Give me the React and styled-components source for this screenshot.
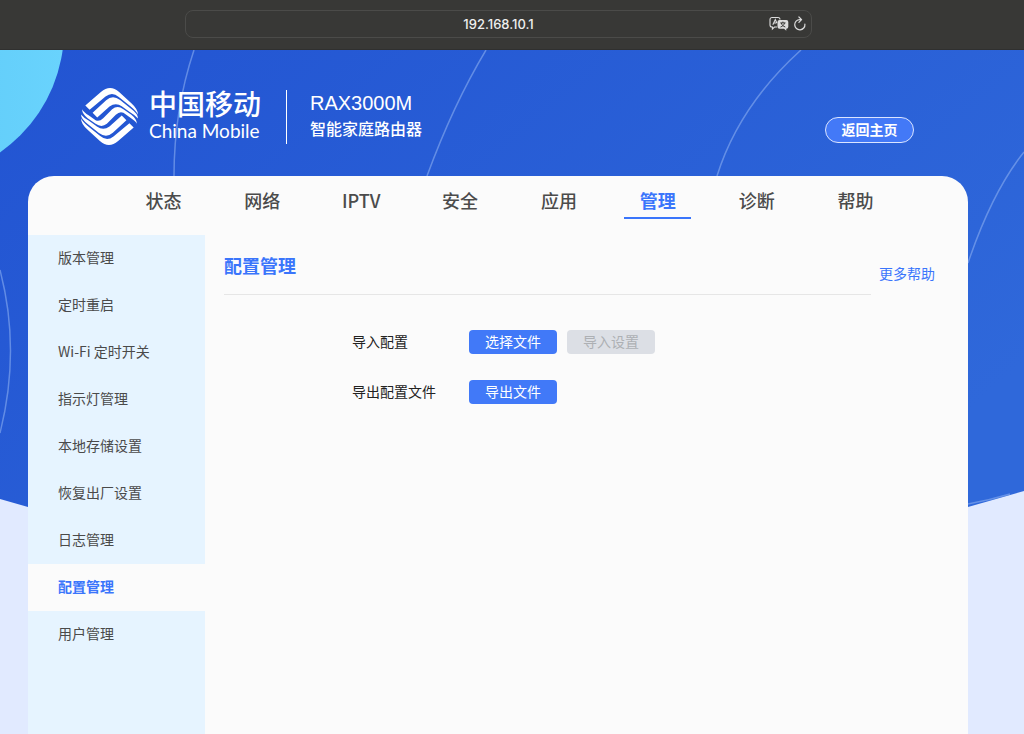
import React from "react";
import styled, { createGlobalStyle, css } from "styled-components";

const GlobalStyle = createGlobalStyle`
  *, *::before, *::after { box-sizing: border-box; }
  html, body, #root { min-height: 100vh; }
  body {
    margin: 0;
    font-family: "Noto Sans CJK SC", "Noto Sans", sans-serif;
    font-size: 14px;
    color: #444;
    background: #e1eaff;
  }
  button, input { font: inherit; }
  #root { display: flex; }
`;

const Page = styled.div`
  flex: 1;
  min-width: 0;
  min-height: 100vh;
  display: flex;
  flex-direction: column;
`;

const BrowserBar = styled.div`
  height: 50px;
  padding: 10px 212px 0 185px;
  background: #383836;
  border-bottom: 1px solid #30302f;
`;

const AddressField = styled.div`
  position: relative;
`;

const AddressInput = styled.input`
  display: block;
  width: 100%;
  height: 28px;
  padding: 0 48px;
  border: 1px solid #4b4b49;
  border-radius: 8px;
  background: transparent;
  color: #efefef;
  font-family: Inter, "Liberation Sans", sans-serif;
  font-size: 13px;
  font-weight: 500;
  text-align: center;
  outline: none;
`;

const AddressTools = styled.div`
  position: absolute;
  top: 6px;
  right: 5px;
  display: flex;
  align-items: center;
  gap: 4px;
`;

const ToolButton = styled.button`
  display: flex;
  padding: 0;
  border: 0;
  background: none;
  color: #dcdcdc;
`;

const Site = styled.div`
  position: relative;
  flex: 1;
  display: flex;
  flex-direction: column;
  overflow: hidden;
`;

const Backdrop = styled.svg`
  position: absolute;
  inset: 0;
  width: 100%;
  height: 100%;
`;

const Header = styled.header`
  position: relative;
  height: 126px;
  padding: 0 110px 31px 81px;
  display: flex;
  align-items: flex-end;
  justify-content: space-between;
  color: #fff;
`;

const Brand = styled.div`
  display: flex;
  align-items: center;
  height: 57px;
`;

const BrandName = styled.div`
  width: 137px;
  height: 57px;
  margin-left: 11px;
  display: flex;
  flex-direction: column;
`;

const BrandChinese = styled.span`
  font-size: 28px;
  line-height: 30px;
  font-weight: 500;
  white-space: nowrap;
`;

const BrandEnglish = styled.span`
  font-family: Lato, sans-serif;
  font-size: 19px;
  line-height: 26px;
  white-space: nowrap;
`;

const Product = styled.div`
  height: 54px;
  padding-left: 23px;
  border-left: 1px solid #fff;
  display: flex;
  flex-direction: column;
  white-space: nowrap;
`;

const Model = styled.span`
  font-family: "Liberation Sans", sans-serif;
  font-size: 20px;
  line-height: 26px;
`;

const ProductType = styled.span`
  font-size: 16px;
  line-height: 25px;
  font-weight: 500;
`;

const HomeButton = styled.button`
  width: 89px;
  height: 26px;
  margin-bottom: 2px;
  padding: 0 0 2px;
  border: 1px solid #dbe5ff;
  border-radius: 13px;
  background: #4379f7;
  color: #fff;
  font-weight: 700;
  line-height: 20px;
`;

const Card = styled.div`
  position: relative;
  flex: 1;
  margin: 0 56px 0 28px;
  display: flex;
  flex-direction: column;
  border-radius: 26px 26px 0 0;
  overflow: hidden;
  background: #fbfbfb;
`;

const TopNav = styled.nav`
  height: 59px;
  padding: 0 63px 0 86px;
  display: flex;
`;

const TopLink = styled.a`
  flex: 1;
  display: flex;
  flex-direction: column;
  align-items: center;
  color: #4b4b4b;
  font-size: 18px;
  font-weight: 500;
  line-height: 26px;
  padding-top: 11px;
  text-decoration: none;

  ${(p) =>
    p.$active &&
    css`
      color: #3a75fb;
      font-weight: 700;
      &::after {
        content: "";
        width: 67px;
        height: 2px;
        margin-top: 4px;
        background: #3a75fb;
      }
    `}
`;

const Body = styled.div`
  flex: 1;
  display: flex;
`;

const Sidebar = styled.nav`
  flex: none;
  width: 177px;
  background: #e6f4ff;
`;

const SideLink = styled.a`
  display: block;
  padding: 0 0 2px 30px;
  line-height: 45px;
  color: ${(p) => (p.$active ? "#3a75fb" : "#4a4a4a")};
  background: ${(p) => (p.$active ? "#fbfbfb" : "transparent")};
  font-weight: ${(p) => (p.$active ? 700 : 400)};
  text-decoration: none;
`;

const Main = styled.main`
  flex: 1;
  padding: 0 33px 0 19px;
`;

const SectionHeader = styled.div`
  display: flex;
  gap: 8px;
  height: 60px;
`;

const SectionTitle = styled.h1`
  flex: 1;
  margin: 0;
  padding-top: 17px;
  border-bottom: 1px solid #e6e6e6;
  color: #3a75fb;
  font-size: 18px;
  font-weight: 700;
  line-height: 26px;
`;

const HelpLink = styled.a`
  padding-top: 27px;
  color: #3a75fb;
  line-height: 22px;
  text-decoration: none;
`;

const Form = styled.div`
  padding: 35px 0 0 128px;
  display: flex;
  flex-direction: column;
  gap: 26px;
`;

const FormRow = styled.div`
  display: flex;
  align-items: center;
  gap: 10px;
`;

const Label = styled.label`
  width: 107px;
  padding-bottom: 2px;
  color: #222;
  line-height: 22px;
`;

const ActionButton = styled.button`
  width: 88px;
  height: 24px;
  padding: 0 0 2px;
  border: 0;
  border-radius: 4px;
  background: #4179f8;
  color: #fff;
  line-height: 22px;

  &:disabled {
    background: #dcdfe5;
    color: #adb0b4;
  }
`;

const TOP_ITEMS = ["状态", "网络", "IPTV", "安全", "应用", "管理", "诊断", "帮助"];
const SIDE_ITEMS = [
  "版本管理",
  "定时重启",
  "Wi-Fi 定时开关",
  "指示灯管理",
  "本地存储设置",
  "恢复出厂设置",
  "日志管理",
  "配置管理",
  "用户管理",
];

function TranslateIcon() {
  return (
    <svg width="20" height="16" viewBox="0 0 20 16" fill="none" aria-hidden="true">
      <path
        d="M8 11H5.5L3.4 13V11H3a2 2 0 0 1-2-2V3.5a2 2 0 0 1 2-2h6a2 2 0 0 1 2 2"
        stroke="currentColor"
        strokeWidth="1.1"
      />
      <path d="M3.8 8.8 6.3 3.5 7.8 7M4.7 7h2.8" stroke="currentColor" strokeWidth="1.1" />
      <path
        d="M10.5 4h6.8a2 2 0 0 1 2 2v4.8a2 2 0 0 1-2 2v2L15 12.8h-4.500a2 2 0 0 1-2-2V6a2 2 0 0 1 2-2z"
        fill="currentColor"
      />
      <path d="M11.300 6.900h5.200M13.900 5.600v1.300M15.500 7c-.5 2-2 3.300-4 4M12.300 7c.5 2 2 3.300 4 4" stroke="#383836" />
    </svg>
  );
}

function ReloadIcon() {
  return (
    <svg width="14" height="16" viewBox="0 0 14 16" fill="none" aria-hidden="true">
      <path
        d="M11.900 8.200A5.100 5.100 0 1 1 6.800 3.600h1.500M5.900 1l2.700 2.600L5.900 6.300"
        stroke="currentColor"
        strokeWidth="1.2"
        strokeLinecap="round"
        strokeLinejoin="round"
      />
    </svg>
  );
}

function WaveHalf() {
  return (
    <>
      <path d="M45 77 L92 36 Q120 12 147 36 L184 70 Q204 88 204 105 Q200 95 182 80 L146 51 Q126 34 106 50 L58 90 Z" />
      <path d="M67 99 L108 61 Q127 44 150 60 L182 86 Q204 102 204 116 Q197 107 180 97 L156 80 Q137 66 118 80 L81 113 Z" />
    </>
  );
}

function BrandLogo() {
  return (
    <svg width="57" height="57" viewBox="32 24 172 172" fill="#fff" role="img" aria-label="China Mobile">
      <WaveHalf />
      <g transform="rotate(180 118 110)">
        <WaveHalf />
      </g>
      <path d="M35 88Q40 97 56 107L76 121Q87 127 99 115L126 88Q142 75 160 88L184 105Q200 118 201 132Q196 123 180 113L160 99Q149 93 137 105L110 132Q94 145 76 132L52 115Q36 102 35 88Z" />
    </svg>
  );
}

function BackdropArt() {
  return (
    <Backdrop viewBox="0 0 1024 684" preserveAspectRatio="xMidYMin slice" aria-hidden="true">
      <defs>
        <linearGradient id="sky" x1="0" y1="0" x2="1" y2="0.6">
          <stop offset="0" stopColor="#2254d2" />
          <stop offset="1" stopColor="#2f68da" />
        </linearGradient>
        <linearGradient id="sun" x1="0" y1="0" x2="1" y2="0">
          <stop offset="0.5" stopColor="#5fcbf8" />
          <stop offset="1" stopColor="#69d3fd" />
        </linearGradient>
      </defs>
      <path d="M0 0H1024V441L968 457Q498 590 28 457L0 449Z" fill="url(#sky)" />
      <circle cx="-85" cy="-20" r="149" fill="url(#sun)" />
      <g fill="none" stroke="#83a7ee" strokeOpacity="0.65" strokeWidth="1.500">
        <path d="M194 0Q174 60 174 126" />
        <path d="M486 0Q453 55 427 126" />
        <path d="M801 0Q739 56 717 126" />
        <path d="M1024 102Q992 142 968 213" />
        <path d="M0 220Q21 300 0 383" />
        <path d="M968 454Q990 450 1010 444" />
      </g>
    </Backdrop>
  );
}

export default function App() {
  return (
    <>
      <GlobalStyle />
      <Page>
        <BrowserBar>
          <AddressField>
            <AddressInput type="text" aria-label="地址" defaultValue="192.168.10.1" />
            <AddressTools>
              <ToolButton type="button" aria-label="翻译">
                <TranslateIcon />
              </ToolButton>
              <ToolButton type="button" aria-label="重新加载">
                <ReloadIcon />
              </ToolButton>
            </AddressTools>
          </AddressField>
        </BrowserBar>
        <Site>
          <BackdropArt />
          <Header>
            <Brand>
              <BrandLogo />
              <BrandName>
                <BrandChinese>中国移动</BrandChinese>
                <BrandEnglish>China Mobile</BrandEnglish>
              </BrandName>
              <Product>
                <Model>RAX3000M</Model>
                <ProductType>智能家庭路由器</ProductType>
              </Product>
            </Brand>
            <HomeButton type="button">返回主页</HomeButton>
          </Header>
          <Card>
            <TopNav>
              {TOP_ITEMS.map((item) => (
                <TopLink key={item} href="#" $active={item === "管理"}>
                  {item}
                </TopLink>
              ))}
            </TopNav>
            <Body>
              <Sidebar>
                {SIDE_ITEMS.map((item) => (
                  <SideLink key={item} href="#" $active={item === "配置管理"}>
                    {item}
                  </SideLink>
                ))}
              </Sidebar>
              <Main>
                <SectionHeader>
                  <SectionTitle>配置管理</SectionTitle>
                  <HelpLink href="#">更多帮助</HelpLink>
                </SectionHeader>
                <Form>
                  <FormRow>
                    <Label htmlFor="choose-file">导入配置</Label>
                    <ActionButton id="choose-file" type="button">选择文件</ActionButton>
                    <ActionButton type="button" disabled>导入设置</ActionButton>
                  </FormRow>
                  <FormRow>
                    <Label htmlFor="export-file">导出配置文件</Label>
                    <ActionButton id="export-file" type="button">导出文件</ActionButton>
                  </FormRow>
                </Form>
              </Main>
            </Body>
          </Card>
        </Site>
      </Page>
    </>
  );
}
